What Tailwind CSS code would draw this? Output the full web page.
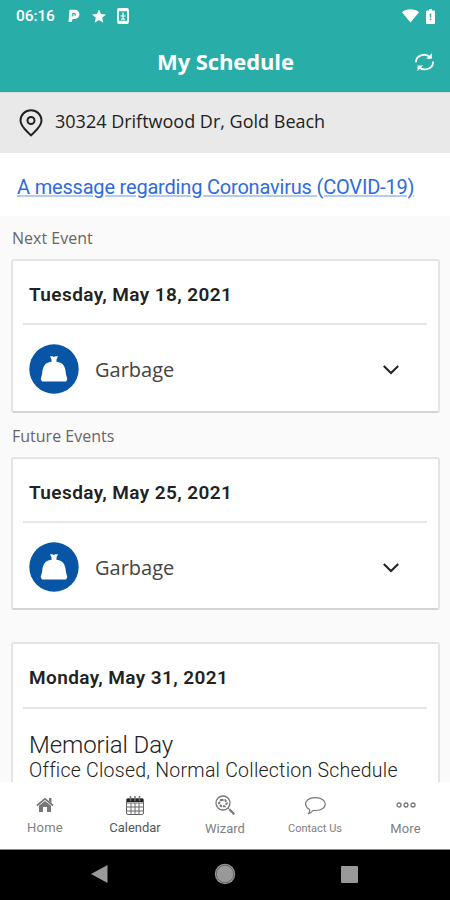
<!DOCTYPE html>
<html lang="en">

<head>
    <meta charset="UTF-8">
    <meta name="viewport" content="width=device-width, initial-scale=1.0">
    <title>My Schedule</title>
    <script src="https://cdn.jsdelivr.net/npm/@tailwindcss/browser@4"></script>
</head>

<body class="bg-[#fafafa]">
    <div class="flex h-[900px] w-[450px] flex-col overflow-hidden font-['Roboto',sans-serif] whitespace-nowrap text-[#222]">
        <header class="h-[92px] shrink-0 bg-[#29ada8] text-white">
            <!-- Status bar -->
            <div class="flex h-8 items-center pl-4 pr-[15px]">
                <span class="w-[39px] pt-[2px] text-[15.500px] font-medium tracking-[-0.1px]">06:16</span>
                <svg class="ml-[13px] h-[14px] w-3" viewBox="0 0 12 14">
                    <path d="M1.500.7h5.300a4.600 4.600 0 0 1 0 9.200H4.500L3.800 13H.5z" fill="currentColor" />
                    <path d="M4.800 7.500V4.600h1.700a.9.900 0 0 1 0 1.800" fill="none" stroke="#29ada8" stroke-width="1.200" />
                </svg>
                <svg class="ml-3 h-[14px] w-[14px]" viewBox="0 0 14 14" fill="currentColor">
                    <path d="M7 .5l2 4.600 5 .4-3.800 3.300 1.100 4.900L7 11.100l-4.300 2.600 1.100-4.900L0 5.500l5-.4z" />
                </svg>
                <svg class="ml-[11px] h-4 w-3" viewBox="0 0 12 16" fill="none">
                    <rect x="1" y="1" width="10" height="14" rx="1" stroke="currentColor" stroke-width="1.800" />
                    <path d="M1 2h10M1 14h10" stroke="currentColor" stroke-width="2.400" />
                    <path d="M6 4.500v6M3.300 8h5.400M4 11.200h4" stroke="currentColor" stroke-width="1.200" />
                </svg>
                <svg class="ml-auto h-[14px] w-[17px]" viewBox="0 0 17 14" fill="currentColor">
                    <path d="M0 3.200C4.800-.6 12.200-.6 17 3.200L8.500 13.600z" />
                </svg>
                <svg class="ml-[7px] h-[15px] w-[9px]" viewBox="0 0 9 15">
                    <path d="M3 0h3v1.500h2q1 0 1 1V14q0 1-1 1H1q-1 0-1-1V2.500q0-1 1-1h2z" fill="currentColor" />
                    <path d="M4.500 4.500v4M4.500 9.500v1.500" stroke="#29ada8" stroke-width="1.500" />
                </svg>
            </div>
            <div class="flex h-[60px] items-center pr-4 pb-[2px]">
                <h1 class="ml-[157px] w-[137px] font-['Open_Sans',sans-serif] text-[22px] font-bold tracking-[-0.1px]">My Schedule</h1>
                <svg class="ml-auto mt-px h-5 w-[19px]" viewBox="0 0 19 20" fill="none" stroke="currentColor" stroke-width="1.800">
                    <path d="M1 10.200C.8 3.500 10 .200 15 5.300M18 9.500C18.500 16.500 9 20 4 15" />
                    <path d="M16.800 1.300v5.500h-5.500zM2.500 18.900v-5.500H8z" fill="currentColor" stroke="none" />
                </svg>
            </div>
        </header>

        <main class="flex min-h-0 grow flex-col overflow-hidden font-['Open_Sans',sans-serif]">
            <div class="flex h-[61px] shrink-0 items-center border-t border-[#d8dede] bg-[#e9e9e9] pl-[19px] pb-[3px]">
                <svg class="mt-[3px] h-7 w-6" viewBox="0 0 23 28" fill="none" stroke="#222" stroke-width="2">
                    <path d="M11.500 26.500C9.500 23.500 1 18.500 1 11.500a10.500 10.300 0 0 1 21 0c0 7-8.500 12-10.500 15z" stroke-linejoin="round" />
                    <circle cx="11.500" cy="11.500" r="3.500" />
                </svg>
                <span class="ml-3 text-[18px]">30324 Driftwood Dr, Gold Beach</span>
            </div>
            <div class="flex h-[63px] shrink-0 items-center bg-white pl-[17px] pt-1">
                <a href="#" class="font-['Roboto',sans-serif] text-xl tracking-[-0.19px] text-[#2e6be0] underline decoration-[#b5caf4] decoration-2 underline-offset-1">A message regarding Coronavirus (COVID-19)</a>
            </div>

            <h2 class="h-[43px] shrink-0 pl-3 text-base leading-[44px] text-[#666]">Next Event</h2>
            <section class="ml-[11px] mr-[10px] h-[154px] shrink-0 rounded-[3px] border-2 border-[#e4e4e4] border-b-[#d4d4d4] bg-white pl-[10px] pr-[11px]">
                <h3 class="h-[64px] border-b-2 border-[#e6e6e6] pl-[6px] font-['Roboto',sans-serif] text-[19px] leading-[67px] font-semibold tracking-[0.4px]">Tuesday, May 18, 2021</h3>
                <div class="flex h-[88px] items-center pl-[6px] pr-[28px]">
                    <svg class="h-[50px] w-[50px]" viewBox="0 0 50 50">
                        <circle cx="25" cy="25" r="24.700" fill="#0755a4" />
                        <path d="M21 12.300h2.500l1.500.7 1.500-.7H29l-1.500 3.200v2.200c3.500.5 6 1.300 7.500 4.300 1.300 2.500 1.700 5 1.900 8l1.400 5-1.200 2.500H13L11.700 35l1.400-5c.2-3 .6-5.500 1.900-8 1.500-3 4-3.800 7.500-4.300v-2.200z" fill="#fff" />
                    </svg>
                    <span class="ml-4 pt-px text-xl text-[#444]">Garbage</span>
                    <svg class="ml-auto mt-[2px] h-[10px] w-4" viewBox="0 0 16 10" fill="none" stroke="#222" stroke-width="2">
                        <path d="M.8 1L8 8l7.200-7" />
                    </svg>
                </div>
            </section>

            <h2 class="h-[44px] shrink-0 pl-3 text-base leading-[46px] text-[#666]">Future Events</h2>
            <section class="ml-[11px] mr-[10px] h-[153px] shrink-0 rounded-[3px] border-2 border-[#e4e4e4] border-b-[#d4d4d4] bg-white pl-[10px] pr-[11px]">
                <h3 class="h-[64px] border-b-2 border-[#e6e6e6] pl-[6px] font-['Roboto',sans-serif] text-[19px] leading-[67px] font-semibold tracking-[0.4px]">Tuesday, May 25, 2021</h3>
                <div class="flex h-[88px] items-center pl-[6px] pr-[28px]">
                    <svg class="h-[50px] w-[50px]" viewBox="0 0 50 50">
                        <circle cx="25" cy="25" r="24.700" fill="#0755a4" />
                        <path d="M21 12.300h2.500l1.500.7 1.500-.7H29l-1.500 3.200v2.200c3.500.5 6 1.300 7.500 4.300 1.300 2.500 1.700 5 1.900 8l1.400 5-1.200 2.500H13L11.700 35l1.400-5c.2-3 .6-5.500 1.900-8 1.500-3 4-3.800 7.500-4.300v-2.200z" fill="#fff" />
                    </svg>
                    <span class="ml-4 pt-px text-xl text-[#444]">Garbage</span>
                    <svg class="ml-auto mt-[2px] h-[10px] w-4" viewBox="0 0 16 10" fill="none" stroke="#222" stroke-width="2">
                        <path d="M.8 1L8 8l7.200-7" />
                    </svg>
                </div>
            </section>

            <section class="ml-[11px] mr-[10px] mt-8 h-[170px] shrink-0 rounded-[3px] border-2 border-[#e4e4e4] bg-white pl-[10px] pr-[11px] font-['Roboto',sans-serif]">
                <h3 class="h-[65px] border-b-2 border-[#e6e6e6] pl-[6px] text-[19px] leading-[68px] font-semibold tracking-[0.4px]">Monday, May 31, 2021</h3>
                <p class="mt-[21px] pl-[6px] text-2xl leading-[30px] font-light tracking-[-0.1px]">Memorial Day</p>
                <p class="pl-[6px] text-[19.500px] leading-[21px] font-light tracking-[0.24px]">Office Closed, Normal Collection Schedule</p>
            </section>
        </main>

        <!-- Tab bar -->
        <nav class="grid h-[67px] shrink-0 grid-cols-5 bg-white text-[13px] leading-4 text-[#808080]">
            <a class="flex flex-col items-center" href="#">
                <span class="flex h-[38px] items-center pt-[7px]">
                    <svg class="h-4 w-[18px]" viewBox="0 0 18 16">
                        <path d="M1 8.500l8-6.700 8 6.700" fill="none" stroke="#777" stroke-width="1.700" />
                        <path d="M13 1h2.500v5L13 4zM3 8.800L9 4l6 4.800V15h-4v-5H7v5H3z" fill="#777" />
                    </svg>
                </span>
                <span class="tracking-[0.2px]">Home</span>
            </a>
            <a class="flex flex-col items-center text-[#555]" href="#">
                <span class="flex h-[38px] items-center pt-[8px]">
                    <svg class="h-[19px] w-[18px]" viewBox="0 0 18 19" fill="none" stroke="#666">
                        <rect x=".5" y="2.500" width="17" height="16" rx="1.500" />
                        <path d="M1 7h16M1 11h16M1 15h16M5 7v11M9 7v11M13 7v11" />
                        <path d="M1 4.500h16" stroke="#222" stroke-width="3" />
                        <path d="M4.500 0v5M9 0v5M13.500 0v5" stroke="#777" stroke-width="1.500" />
                    </svg>
                </span>
                <span>Calendar</span>
            </a>
            <a class="flex flex-col items-center" href="#">
                <span class="flex h-[39px] items-center pt-[6px]">
                    <svg class="h-5 w-5" viewBox="0 0 20 20" fill="none" stroke="#777">
                        <circle cx="8" cy="8" r="7" stroke-width="1.300" />
                        <path d="M6 5h4l2 3-2 3.200H6L4 8z" stroke-width="1.900" stroke-dasharray="2.600 1" />
                        <path d="M13 13l1.500 1.500" />
                        <path d="M14.300 14.300l5 5" stroke-width="2.200" />
                    </svg>
                </span>
                <span>Wizard</span>
            </a>
            <a class="flex flex-col items-center text-[11px]" href="#">
                <span class="flex h-[39px] items-center pt-[9px]">
                    <svg class="h-[18px] w-[21px]" viewBox="0 0 21 18" fill="none" stroke="#777" stroke-width="1.200">
                        <path d="M4.500 12.500C-3.500 7 2 .7 10.500.7c13 0 13 12.800 0 12.800H8c-1 1.500-2.500 3-5 3.500 1.500-1 2-2.500 1.500-4.500z" />
                    </svg>
                </span>
                <span>Contact Us</span>
            </a>
            <a class="flex flex-col items-center pl-px" href="#">
                <span class="flex h-[39px] items-center pt-[7px]">
                    <svg class="h-[6px] w-5" viewBox="0 0 20 6" fill="none" stroke="#777" stroke-width="1.300">
                        <circle cx="3" cy="3" r="2" />
                        <circle cx="10" cy="3" r="2" />
                        <circle cx="17" cy="3" r="2" />
                    </svg>
                </span>
                <span class="tracking-[0.1px]">More</span>
            </a>
        </nav>

        <!-- Android navigation -->
        <div class="flex h-[51px] shrink-0 items-center border-t border-[#888] bg-black pb-[2px] pl-[91px]">
            <svg class="h-5 w-[17px]" viewBox="0 0 17 20" fill="#999">
                <path d="M0 10L16.500 1v18z" />
            </svg>
            <svg class="ml-[106px] h-[22px] w-[22px]" viewBox="0 0 22 22">
                <circle cx="11" cy="11" r="10.200" fill="#999" />
                <circle cx="11" cy="11" r="8.700" fill="none" stroke="#555" stroke-width=".8" />
            </svg>
            <span class="ml-[105px] h-[17px] w-[17px] rounded-[1px] bg-[#999]"></span>
        </div>
    </div>
</body>

</html>
